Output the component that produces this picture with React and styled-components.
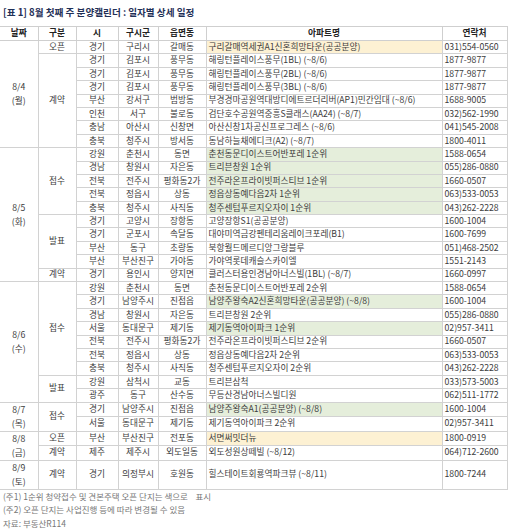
import React from 'react';
import styled, { createGlobalStyle } from 'styled-components';

const GlobalStyle = createGlobalStyle`
  html, body {
    margin: 0;
    padding: 0;
    background: #fff;
  }
  body {
    font-family: "Noto Sans CJK KR", "Noto Sans", sans-serif;
  }
`;

const Page = styled.div`
  width: 512px;
  height: 529px;
  overflow: hidden;
`;

const Title = styled.h1`
  margin: 0;
  height: 26px;
  box-sizing: border-box;
  padding: 5px 0 0 3px;
  font-size: 9.6px;
  line-height: 14px;
  font-weight: 700;
  color: #1f3057;
`;

const Table = styled.table`
  width: 507px;
  border-collapse: collapse;
  table-layout: fixed;
  font-size: 8.7px;
  color: #3c3c3c;
`;

const HeadRow = styled.tr`
  height: 14px;
`;

const Th = styled.th`
  padding: 0;
  font-weight: 700;
  color: #222;
  line-height: 1;
  border: 1px solid #cfcfcf;
  &:first-child {
    border-left: none;
  }
`;

const Row = styled.tr`
  height: ${(p) => (p.$tall ? '26.8px' : '13.4px')};
`;

const Td = styled.td`
  padding: 0 0 0 ${(p) => (p.$left ? '2px' : '0')};
  text-align: ${(p) => (p.$left ? 'left' : 'center')};
  white-space: nowrap;
  overflow: hidden;
  line-height: 1;
  border: 1px solid #d2d2d2;
  background: ${(p) =>
    p.$tone === 'open' ? '#fdf1d3' : p.$tone === 'first' ? '#e5eedb' : '#fff'};
`;

const DateCell = styled(Td)`
  border-left: none;
  line-height: 14px;
`;

const Notes = styled.div`
  padding: 0 0 0 3px;
  font-size: 8.5px;
  line-height: 13.5px;
  color: #777;
  white-space: pre;
`;

const groups = [
  {
    date: '8/4',
    day: '월',
    sections: [
      {
        kind: '오픈',
        rows: [['경기', '구리시', '갈매동', '구리갈매역세권A1신혼희망타운(공공분양)', '031)554-0560', 'open']],
      },
      {
        kind: '계약',
        rows: [
          ['경기', '김포시', '풍무동', '해링턴플레이스풍무(1BL) (~8/6)', '1877-9877'],
          ['경기', '김포시', '풍무동', '해링턴플레이스풍무(2BL) (~8/6)', '1877-9877'],
          ['경기', '김포시', '풍무동', '해링턴플레이스풍무(3BL) (~8/6)', '1877-9877'],
          ['부산', '강서구', '범방동', '부경경마공원역대방디에트르더리버(AP1)민간임대 (~8/6)', '1688-9005'],
          ['인천', '서구', '불로동', '검단호수공원역중흥S클래스(AA24) (~8/7)', '032)562-1990'],
          ['충남', '아산시', '신창면', '아산신창1차공신프로그레스 (~8/6)', '041)545-2008'],
          ['충북', '청주시', '방서동', '동남하늘채에디크(A2) (~8/7)', '1800-4011'],
        ],
      },
    ],
  },
  {
    date: '8/5',
    day: '화',
    sections: [
      {
        kind: '접수',
        rows: [
          ['강원', '춘천시', '동면', '춘천동문디이스트어반포레 1순위', '1588-0654', 'first'],
          ['경남', '창원시', '자은동', '트리븐창원 1순위', '055)286-0880', 'first'],
          ['전북', '전주시', '평화동2가', '전주라온프라이빗퍼스티브 1순위', '1660-0507', 'first'],
          ['전북', '정읍시', '상동', '정읍상동예다음2차 1순위', '063)533-0053', 'first'],
          ['충북', '청주시', '사직동', '청주센텀푸르지오자이 1순위', '043)262-2228', 'first'],
        ],
      },
      {
        kind: '발표',
        rows: [
          ['경기', '고양시', '장항동', '고양장항S1(공공분양)', '1600-1004'],
          ['경기', '군포시', '속달동', '대야미역금강펜테리움레이크포레(B1)', '1600-7699'],
          ['부산', '동구', '초량동', '북항월드메르디앙그랑블루', '051)468-2502'],
          ['부산', '부산진구', '가야동', '가야역롯데캐슬스카이엘', '1551-2143'],
        ],
      },
      {
        kind: '계약',
        rows: [['경기', '용인시', '양지면', '클러스터용인경남아너스빌(1BL) (~8/7)', '1660-0997']],
      },
    ],
  },
  {
    date: '8/6',
    day: '수',
    sections: [
      {
        kind: '접수',
        rows: [
          ['강원', '춘천시', '동면', '춘천동문디이스트어반포레 2순위', '1588-0654'],
          ['경기', '남양주시', '진접읍', '남양주왕숙A2신혼희망타운(공공분양) (~8/8)', '1600-1004', 'first'],
          ['경남', '창원시', '자은동', '트리븐창원 2순위', '055)286-0880'],
          ['서울', '동대문구', '제기동', '제기동역아이파크 1순위', '02)957-3411', 'first'],
          ['전북', '전주시', '평화동2가', '전주라온프라이빗퍼스티브 2순위', '1660-0507'],
          ['전북', '정읍시', '상동', '정읍상동예다음2차 2순위', '063)533-0053'],
          ['충북', '청주시', '사직동', '청주센텀푸르지오자이 2순위', '043)262-2228'],
        ],
      },
      {
        kind: '발표',
        rows: [
          ['강원', '삼척시', '교동', '트리븐삼척', '033)573-5003'],
          ['광주', '동구', '산수동', '무등산경남아너스빌디원', '062)511-1772'],
        ],
      },
    ],
  },
  {
    date: '8/7',
    day: '목',
    sections: [
      {
        kind: '접수',
        rows: [
          ['경기', '남양주시', '진접읍', '남양주왕숙A1(공공분양) (~8/8)', '1600-1004', 'first'],
          ['서울', '동대문구', '제기동', '제기동역아이파크 2순위', '02)957-3411'],
        ],
      },
    ],
  },
  {
    date: '8/8',
    day: '금',
    sections: [
      { kind: '오픈', rows: [['부산', '부산진구', '전포동', '서면써밋더뉴', '1800-0919', 'open']] },
      { kind: '계약', rows: [['제주', '제주시', '외도일동', '외도성원상떼빌 (~8/12)', '064)712-2600']] },
    ],
  },
  {
    date: '8/9',
    day: '토',
    tall: true,
    sections: [
      { kind: '계약', rows: [['경기', '의정부시', '호원동', '힐스테이트회룡역파크뷰 (~8/11)', '1800-7244']] },
    ],
  },
];

const widths = [38, 38, 42, 40, 48, 236, 65];
const heads = ['날짜', '구분', '시', '구시군', '읍면동', '아파트명', '연락처'];

const renderGroup = (g) => {
  const total = g.sections.reduce((n, s) => n + s.rows.length, 0);
  const out = [];
  g.sections.forEach((s, si) => {
    s.rows.forEach((r, ri) => {
      const [si1, gu, dong, apt, tel, tone] = r;
      out.push(
        <Row key={`${g.date}-${si}-${ri}`} $tall={g.tall}>
          {si === 0 && ri === 0 && (
            <DateCell rowSpan={total}>
              {g.date}
              <br />({g.day})
            </DateCell>
          )}
          {ri === 0 && <Td rowSpan={s.rows.length}>{s.kind}</Td>}
          <Td>{si1}</Td>
          <Td>{gu}</Td>
          <Td>{dong}</Td>
          <Td $left $tone={tone}>{apt}</Td>
          <Td $left>{tel}</Td>
        </Row>
      );
    });
  });
  return out;
};

export default function App() {
  return (
    <Page>
      <GlobalStyle />
      <Title>[표 1] 8월 첫째 주 분양캘린더 : 일자별 상세 일정</Title>
      <Table>
        <colgroup>
          {widths.map((w, i) => (
            <col key={i} style={{ width: w }} />
          ))}
        </colgroup>
        <thead>
          <HeadRow>
            {heads.map((h) => (
              <Th key={h}>{h}</Th>
            ))}
          </HeadRow>
        </thead>
        <tbody>{groups.map(renderGroup)}</tbody>
      </Table>
      <Notes>
        {'(주1) 1순위 청약접수 및 견본주택 오픈 단지는 색으로    표시'}
        <br />
        {'(주2) 오픈 단지는 사업진행 등에 따라 변경될 수 있음'}
        <br />
        {'자료: 부동산R114'}
      </Notes>
    </Page>
  );
}
